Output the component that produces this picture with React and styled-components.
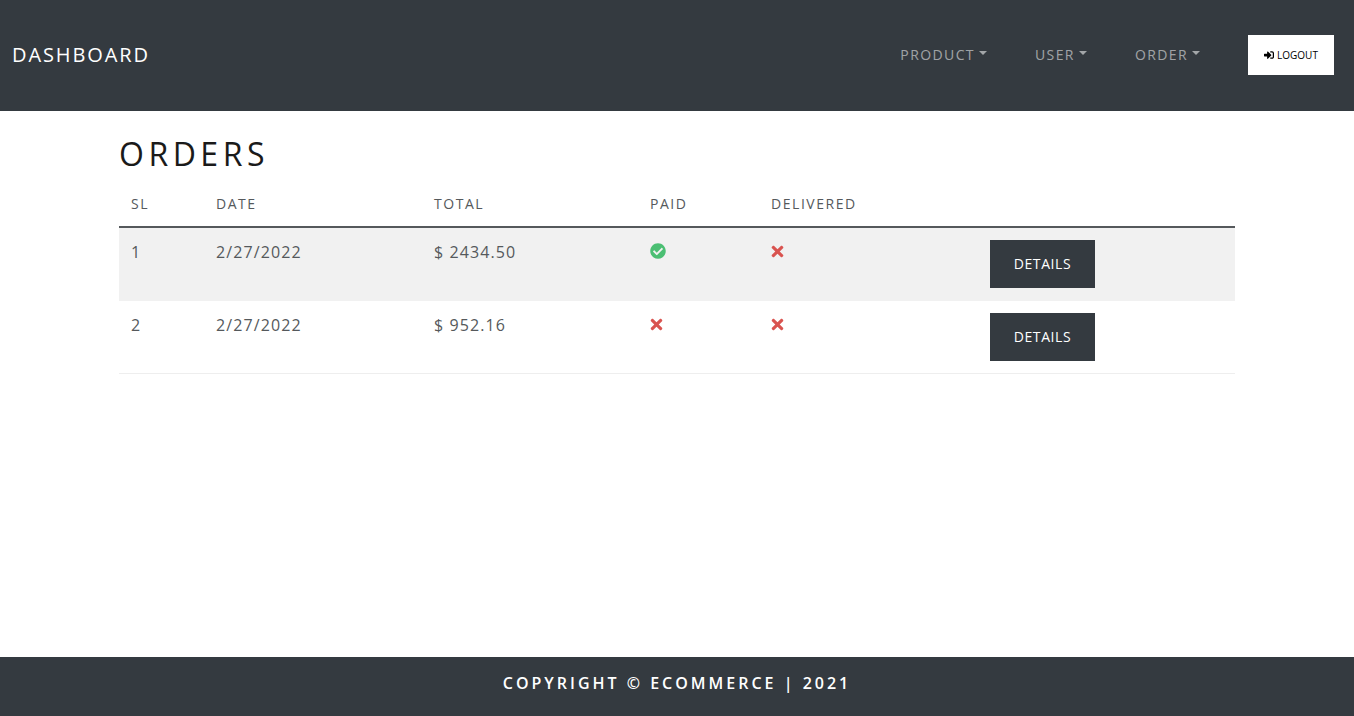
import React from "react";
import styled, { createGlobalStyle } from "styled-components";
import { FaCheckCircle, FaTimes, FaSignInAlt } from "react-icons/fa";

const GlobalStyle = createGlobalStyle`
  html, body {
    margin: 0;
    padding: 0;
    background: #fff;
    font-family: "Open Sans", "Noto Sans", sans-serif;
  }
  * {
    box-sizing: border-box;
  }
`;

const Page = styled.div`
  min-height: 716px;
  display: flex;
  flex-direction: column;
`;

const Navbar = styled.nav`
  height: 111px;
  background: #343a40;
  display: flex;
  align-items: center;
  padding: 0 20px 1px 12px;
`;

const Brand = styled.a`
  font-size: 20px;
  letter-spacing: 1.9px;
  color: #fff;
  margin-right: auto;
  padding-bottom: 2px;
`;

const NavItem = styled.a`
  display: flex;
  align-items: center;
  font-size: 14px;
  letter-spacing: 1.4px;
  color: rgba(255, 255, 255, 0.55);
  margin-right: 48px;
  padding-bottom: 2px;
  &::after {
    content: "";
    margin-left: 4px;
    margin-top: -2px;
    border-top: 4px solid currentColor;
    border-left: 4px solid transparent;
    border-right: 4px solid transparent;
  }
`;

const LogoutButton = styled.button`
  width: 86px;
  height: 40px;
  border: 0;
  background: #fff;
  color: #000;
  font-family: inherit;
  font-size: 10px;
  display: flex;
  align-items: center;
  justify-content: center;
  gap: 3px;
  padding: 0;
`;

const Main = styled.main`
  flex: 1;
  width: 1116px;
  margin: 0 auto;
`;

const Title = styled.h1`
  margin: 0;
  padding-top: 21px;
  font-size: 32px;
  line-height: 44px;
  font-weight: 400;
  letter-spacing: 4.5px;
  color: #1a1a1a;
`;

const Table = styled.table`
  width: 100%;
  border-collapse: collapse;
  table-layout: fixed;
  color: #55595c;
`;

const HeadCell = styled.th`
  width: ${(p) => p.$width}px;
  height: 51px;
  padding: 4px 12px 0;
  text-align: left;
  font-size: 14px;
  font-weight: 400;
  letter-spacing: 1.55px;
  border-bottom: 2px solid #55595c;
`;

const Row = styled.tr`
  background: ${(p) => (p.$striped ? "#f1f1f1" : "#fff")};
  border-bottom: 1px solid ${(p) => (p.$striped ? "#f1f1f1" : "#eee")};
`;

const Cell = styled.td`
  height: 73px;
  padding: 12px;
  vertical-align: top;
  font-size: 16px;
  line-height: 24px;
  letter-spacing: 1.1px;
`;

const Done = styled(FaCheckCircle)`
  display: block;
  margin-top: 3px;
  font-size: 16px;
  color: #4bbf73;
`;

const NotDone = styled(FaTimes)`
  display: block;
  margin: 3px 0 0 -2px;
  font-size: 17px;
  color: #d9534f;
`;

const DetailsButton = styled.button`
  width: 105px;
  height: 48px;
  border: 0;
  background: #343a40;
  color: #fff;
  font-family: inherit;
  font-size: 14px;
  letter-spacing: 0.6px;
  padding: 0 0 2px;
`;

const Footer = styled.footer`
  height: 59px;
  background: #343a40;
  color: #fff;
  display: flex;
  align-items: center;
  justify-content: center;
  padding-bottom: 7px;
  font-size: 16px;
  font-weight: 600;
  letter-spacing: 3px;
`;

const columns = [
  { label: "SL", width: 85 },
  { label: "DATE", width: 218 },
  { label: "TOTAL", width: 216 },
  { label: "PAID", width: 121 },
  { label: "DELIVERED", width: 219 },
  { label: "", width: 257 },
];

const orders = [
  { id: 1, date: "2/27/2022", total: "$ 2434.50", paid: true, delivered: false },
  { id: 2, date: "2/27/2022", total: "$ 952.16", paid: false, delivered: false },
];

const Status = ({ ok }) => (ok ? <Done /> : <NotDone />);

export default function App() {
  return (
    <Page>
      <GlobalStyle />
      <Navbar>
        <Brand>DASHBOARD</Brand>
        <NavItem>PRODUCT</NavItem>
        <NavItem>USER</NavItem>
        <NavItem>ORDER</NavItem>
        <LogoutButton>
          <FaSignInAlt size={10} /> LOGOUT
        </LogoutButton>
      </Navbar>
      <Main>
        <Title>ORDERS</Title>
        <Table>
          <thead>
            <tr>
              {columns.map((c) => (
                <HeadCell key={c.label} $width={c.width}>
                  {c.label}
                </HeadCell>
              ))}
            </tr>
          </thead>
          <tbody>
            {orders.map((o, i) => (
              <Row key={o.id} $striped={i % 2 === 0}>
                <Cell>{o.id}</Cell>
                <Cell>{o.date}</Cell>
                <Cell>{o.total}</Cell>
                <Cell>
                  <Status ok={o.paid} />
                </Cell>
                <Cell>
                  <Status ok={o.delivered} />
                </Cell>
                <Cell>
                  <DetailsButton>DETAILS</DetailsButton>
                </Cell>
              </Row>
            ))}
          </tbody>
        </Table>
      </Main>
      <Footer>COPYRIGHT © ECOMMERCE | 2021</Footer>
    </Page>
  );
}
